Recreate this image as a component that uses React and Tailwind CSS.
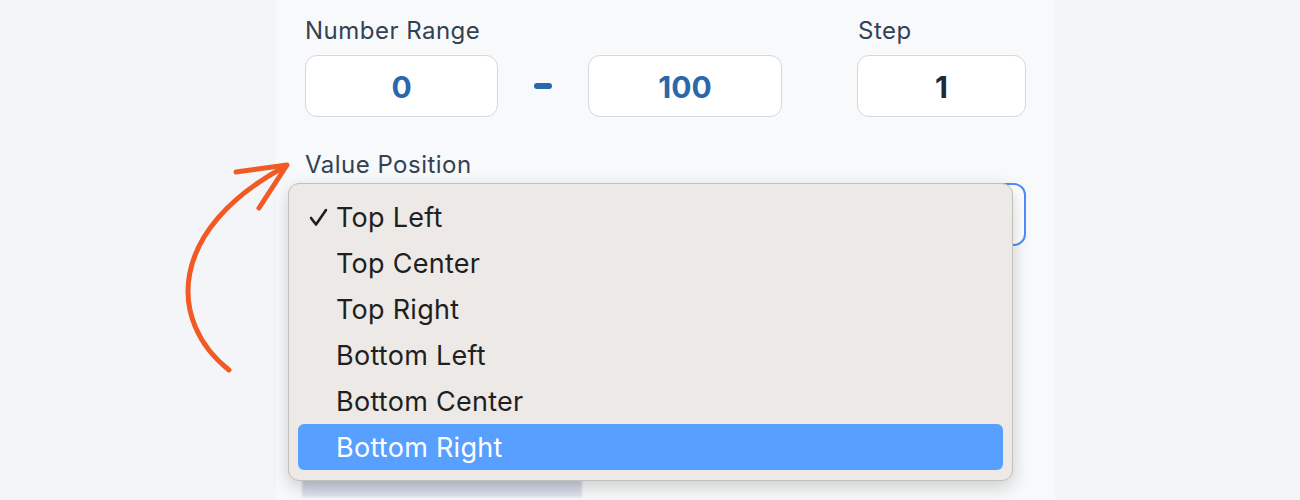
const options = ["Top Left", "Top Center", "Top Right", "Bottom Left", "Bottom Center", "Bottom Right"];

const NumberBox = ({ value, className = "" }) => (
    <div className={`h-[62px] rounded-[12px] border border-[#d4d7de] bg-white flex items-center justify-center text-[30px] font-bold pt-[2px] ${className}`}>
        {value}
    </div>
);

const App = () => {
    const selected = "Top Left";
    const highlighted = "Bottom Right";

    return (
        <div className="w-[1300px] h-[500px] bg-[#f4f5f9] flex overflow-hidden relative" style={{ fontFamily: "Inter, 'Noto Sans', sans-serif" }}>
            {/* hand-drawn pointer */}
            <svg className="absolute left-0 top-0 pointer-events-none z-20" width="320" height="400" viewBox="0 0 320 400" fill="none">
                <path d="M229 370 C 168 322, 166 230, 286 166" stroke="#f15a24" strokeWidth="5" strokeLinecap="round" />
                <path d="M236 172 L 287 165 L 259 208" stroke="#f15a24" strokeWidth="5" strokeLinecap="round" strokeLinejoin="round" />
            </svg>

            <div className="ml-[276px] w-[779px] h-full bg-[#f8f9fb] relative px-[29px] pt-[17px]">
                <div className="flex">
                    <div>
                        <div className="text-[24px] leading-[28px] tracking-[0.02em] text-[#334155]">Number Range</div>
                        <div className="flex items-center gap-[36px] mt-[10px]">
                            <NumberBox value="0" className="w-[193px] text-[#2b68ab]" />
                            <div className="w-[18px] h-[6px] rounded-full bg-[#2b68ab]" />
                            <NumberBox value="100" className="w-[194px] text-[#2b68ab]" />
                        </div>
                    </div>
                    <div className="ml-auto">
                        <div className="text-[24px] leading-[28px] tracking-[0.02em] text-[#334155] pl-[1px]">Step</div>
                        <NumberBox value="1" className="w-[169px] mt-[10px] text-[#1e293b]" />
                    </div>
                </div>

                <div className="text-[24px] leading-[28px] tracking-[0.02em] text-[#334155] mt-[34px]">Value Position</div>
                <div className="mt-[4px] h-[63px] rounded-[12px] border-2 border-[#4a90f5] bg-white" />

                <div className="mt-[231px] ml-[-3px] w-[280px] h-[20px] bg-gradient-to-b from-[#c6ccdf] to-[#dfe3ee] blur-[1px]" />

                {/* open native menu */}
                <div className="absolute left-[12px] top-[183px] w-[725px] rounded-[11px] border border-[#c2c0bd] bg-[#ece9e6] shadow-[0_6px_18px_rgba(0,0,0,0.18)] px-[9px] pt-[10px] pb-[10px] z-10">
                    {options.map(opt => (
                        <div
                            key={opt}
                            className={`h-[46px] rounded-[6px] flex items-center relative pl-[38px] pt-[3px] text-[27px] tracking-[0.01em] ${opt === highlighted ? "bg-[#57a0ff] text-white" : "text-[#1f1f1f]"}`}
                        >
                            {opt === selected && (
                                <svg className="absolute left-[11px] top-[14px]" width="19" height="19" viewBox="0 0 19 19" fill="none">
                                    <path d="M2 10 L7 16.5 L17 2" stroke="#1f1f1f" strokeWidth="2.6" strokeLinecap="round" strokeLinejoin="round" />
                                </svg>
                            )}
                            {opt}
                        </div>
                    ))}
                </div>
            </div>
        </div>
    );
};

export default App;
